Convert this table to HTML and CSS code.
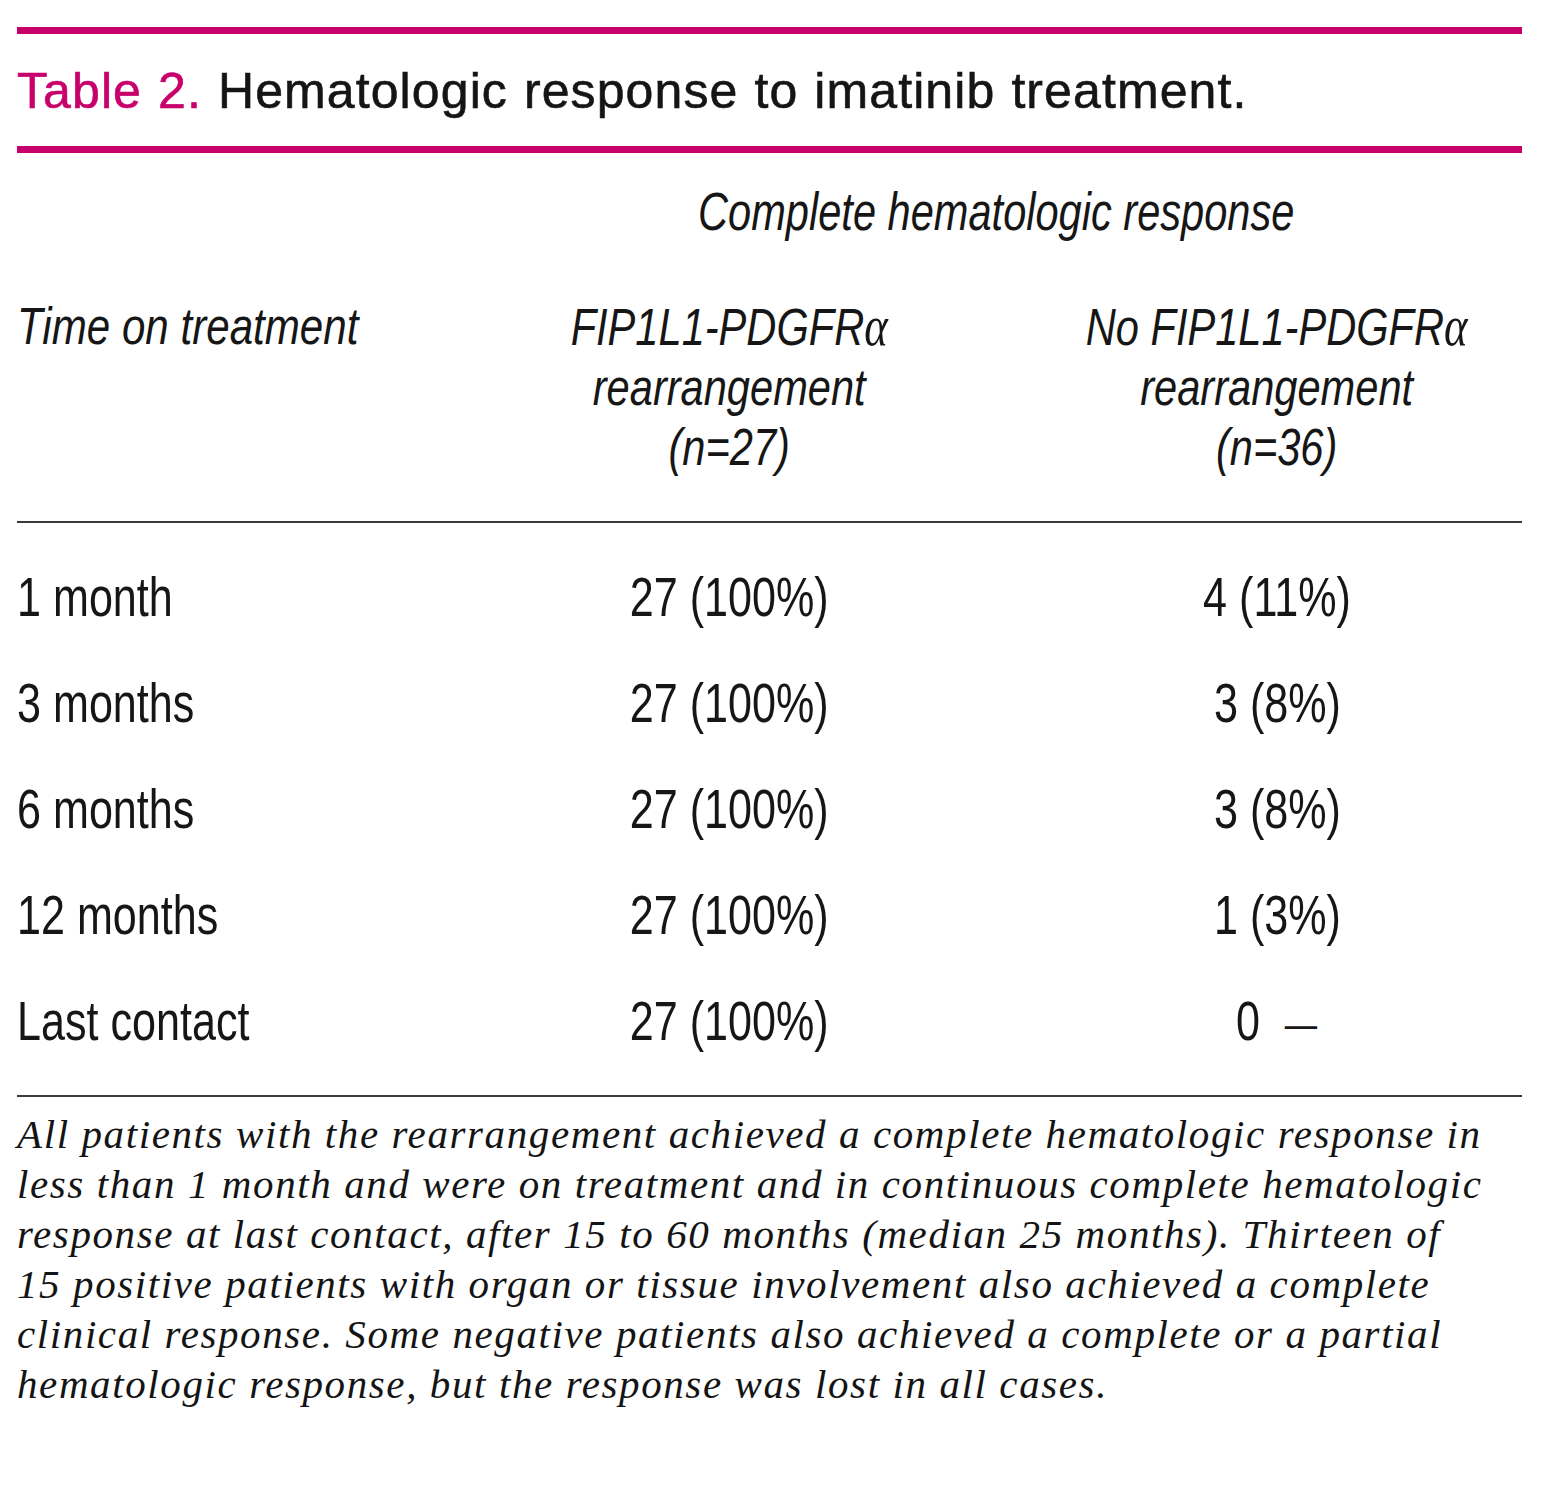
FILE: index.html
```html
<!DOCTYPE html>
<html>
<head>
<meta charset="utf-8">
<link rel="stylesheet" href="styles.css">
</head>
<body>
<div class="page">
  <div class="bar"></div>
  <h1 class="title"><span class="label">Table 2.</span> Hematologic response to imatinib treatment.</h1>
  <div class="bar"></div>
  <div class="grid">
    <div class="span-head"><span class="cx">Complete hematologic response</span></div>
    <div class="head head-left"><span class="cx">Time on treatment</span></div>
    <div class="head"><span class="cx">FIP1L1-PDGFR<span class="alpha">α</span><br>rearrangement<br>(n=27)</span></div>
    <div class="head"><span class="cx">No FIP1L1-PDGFR<span class="alpha">α</span><br>rearrangement<br>(n=36)</span></div>
    <div class="rule"></div>
    <div class="cell left"><span class="cx">1 month</span></div><div class="cell"><span class="cx">27 (100%)</span></div><div class="cell"><span class="cx">4 (11%)</span></div>
    <div class="cell left"><span class="cx">3 months</span></div><div class="cell"><span class="cx">27 (100%)</span></div><div class="cell"><span class="cx">3 (8%)</span></div>
    <div class="cell left"><span class="cx">6 months</span></div><div class="cell"><span class="cx">27 (100%)</span></div><div class="cell"><span class="cx">3 (8%)</span></div>
    <div class="cell left"><span class="cx">12 months</span></div><div class="cell"><span class="cx">27 (100%)</span></div><div class="cell"><span class="cx">1 (3%)</span></div>
    <div class="cell left"><span class="cx">Last contact</span></div><div class="cell"><span class="cx">27 (100%)</span></div><div class="cell"><span class="cx">0<span class="dash">—</span></span></div>
    <div class="rule rule-bottom"></div>
  </div>
  <p class="note">All patients with the rearrangement achieved a complete hematologic response in<br>less than 1 month and were on treatment and in continuous complete hematologic<br>response at last contact, after 15 to 60 months (median 25 months). Thirteen of<br>15 positive patients with organ or tissue involvement also achieved a complete<br>clinical response. Some negative patients also achieved a complete or a partial<br>hematologic response, but the response was lost in all cases.</p>
</div>
</body>
</html>
```
FILE: styles.css
```css
html, body {
  margin: 0;
  padding: 0;
  background: #ffffff;
}
.page {
  width: 1505px;
  padding: 27px 0 0 17px;
  color: #161616;
}
.bar {
  height: 7px;
  background: #c8006b;
}
.title {
  margin: 0;
  height: 112px;
  padding-top: 0;
  line-height: 114px;
  font-family: "Liberation Sans", Arial, sans-serif;
  font-weight: normal;
  font-size: 50px;
  letter-spacing: 1.1px;
  word-spacing: 1px;
  color: #151515;
  white-space: nowrap;
  -webkit-text-stroke: 0.6px currentColor;
}
.label {
  color: #c8006b;
}
.grid {
  display: grid;
  grid-template-columns: 409px 606px 490px;
  font-family: "Liberation Sans", Arial, sans-serif;
}
.cx {
  display: inline-block;
  transform: scaleX(0.78);
  transform-origin: 50% 50%;
  white-space: nowrap;
}
.left .cx,
.head-left .cx {
  transform-origin: 0 50%;
}
.span-head {
  grid-column: 2 / 4;
  font-style: italic;
  font-size: 54px;
  text-align: center;
  padding-left: 45px;
  height: 143px;
  line-height: 117px;
}
.span-head .cx {
  transform: scaleX(0.77);
}
.head {
  font-style: italic;
  font-size: 52px;
  line-height: 60px;
  text-align: center;
  height: 225px;
}
.head .cx {
  transform: scaleX(0.8);
}
.head-left {
  text-align: left;
}
.head-left .cx {
  transform: scaleX(0.81);
}
.alpha {
  font-family: "Liberation Serif", serif;
  font-size: 56px;
}
.rule {
  grid-column: 1 / 4;
  height: 2px;
  background: #3a3a3a;
  margin-bottom: 21px;
}
.rule-bottom {
  margin-top: 21px;
  margin-bottom: 0;
}
.cell {
  font-size: 56px;
  height: 106px;
  line-height: 106px;
  text-align: center;
}
.cell .cx {
  transform: scaleX(0.77);
}
.cell.left {
  text-align: left;
}
.dash {
  font-size: 42px;
  margin-left: 32px;
  vertical-align: 2px;
}
.note {
  margin: 12px 0 0 0;
  font-family: "Liberation Serif", "Times New Roman", serif;
  font-style: italic;
  font-size: 41px;
  line-height: 50px;
  letter-spacing: 1.6px;
  color: #141414;
  white-space: nowrap;
}
```
